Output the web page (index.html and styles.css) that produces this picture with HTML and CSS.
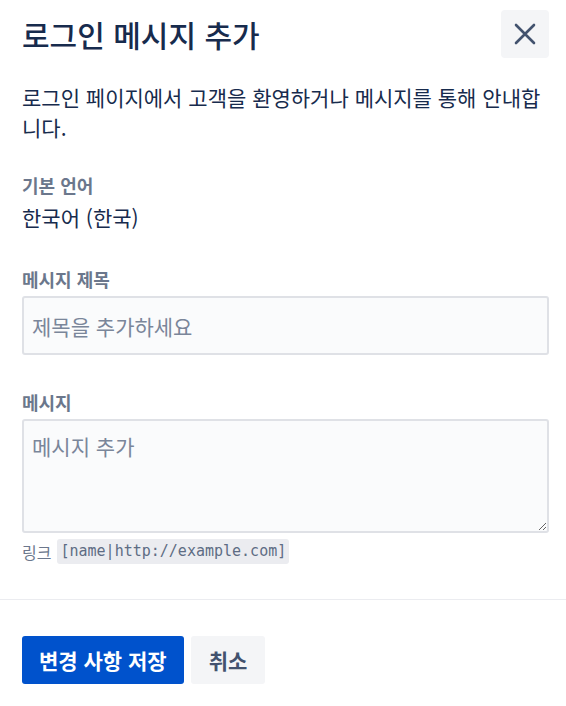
FILE: index.html
```html
<!DOCTYPE html>
<html lang="ko">
<head>
    <meta charset="UTF-8">
    <meta name="viewport" content="width=device-width, initial-scale=1.0">
    <title>로그인 메시지 추가</title>
    <link rel="stylesheet" href="styles.css">
</head>
<body>
    <div class="dialog">
        <div class="dialog-header">
            <h1>로그인 메시지 추가</h1>
            <button class="close-btn" aria-label="닫기">
                <svg width="22" height="22" viewBox="0 0 22 22">
                    <path d="M2 2 L20 20 M20 2 L2 20" stroke="#42526e" stroke-width="2.6" stroke-linecap="round" fill="none"/>
                </svg>
            </button>
        </div>
        <div class="dialog-body">
            <p class="intro">로그인 페이지에서 고객을 환영하거나 메시지를 통해 안내합니다.</p>
            <div class="field first">
                <div class="label">기본 언어</div>
                <div class="value">한국어 (한국)</div>
            </div>
            <div class="field">
                <label class="label" for="title">메시지 제목</label>
                <input id="title" class="text-input" type="text" placeholder="제목을 추가하세요">
            </div>
            <div class="field">
                <label class="label" for="msg">메시지</label>
                <textarea id="msg" class="text-area" placeholder="메시지 추가"></textarea>
                <div class="hint">링크 <code>[name|http://example.com]</code></div>
            </div>
        </div>
        <div class="dialog-footer">
            <button class="btn btn-primary">변경 사항 저장</button>
            <button class="btn">취소</button>
        </div>
    </div>
</body>
</html>
```

FILE: styles.css
```css
body {
    margin: 0;
    font-family: "Noto Sans CJK KR", "Noto Sans", sans-serif;
    color: #172b4d;
    background: #fff;
}
.dialog-header {
    display: flex;
    align-items: center;
    justify-content: space-between;
    padding: 10px 17px 0 22px;
}
.dialog-header h1 {
    margin: 0;
    font-size: 30px;
    font-weight: 500;
    line-height: 36px;
    color: #172b4d;
}
.close-btn {
    width: 48px;
    height: 48px;
    border: none;
    border-radius: 4px;
    background-color: #f4f5f7;
    display: flex;
    align-items: center;
    justify-content: center;
    padding: 0;
}
.dialog-body {
    padding: 0 17px 35px 22px;
}
.intro {
    margin: 24px 0 0;
    font-size: 21px;
    line-height: 30px;
}
.field {
    display: flex;
    flex-direction: column;
    margin-top: 35px;
}
.field.first {
    margin-top: 31px;
}
.label {
    font-size: 18px;
    font-weight: 700;
    line-height: 24px;
    color: #6b778c;
    margin-bottom: 5px;
}
.value {
    font-size: 21px;
    line-height: 30px;
}
.text-input,
.text-area {
    box-sizing: border-box;
    width: 100%;
    margin: 0;
    border: 2px solid #dfe1e6;
    border-radius: 3px;
    background-color: #fafbfc;
    font-family: inherit;
    font-size: 21px;
    color: #172b4d;
}
.text-input {
    height: 59px;
    padding: 0 8px;
}
.text-area {
    display: block;
    height: 114px;
    padding: 10px 8px;
    line-height: 30px;
    resize: vertical;
}
.text-input::placeholder,
.text-area::placeholder {
    color: #7a869a;
}
.hint {
    display: flex;
    align-items: center;
    gap: 6px;
    margin-top: 6px;
    font-size: 16px;
    color: #6b778c;
}
.hint code {
    font-family: "DejaVu Sans Mono", monospace;
    font-size: 15px;
    line-height: 19px;
    padding: 3px 3px;
    border-radius: 3px;
    background-color: #ebecf0;
    color: #5e6c84;
}
.dialog-footer {
    border-top: 1px solid #ebecf0;
    padding: 36px 22px 22px;
    display: flex;
    gap: 7px;
}
.btn {
    height: 48px;
    padding: 0 18px;
    border: none;
    border-radius: 3px;
    background-color: #f4f5f7;
    color: #42526e;
    font-family: inherit;
    font-size: 21px;
    font-weight: 700;
}
.btn-primary {
    padding: 0 17px;
    background-color: #0052cc;
    color: #fff;
}
```
